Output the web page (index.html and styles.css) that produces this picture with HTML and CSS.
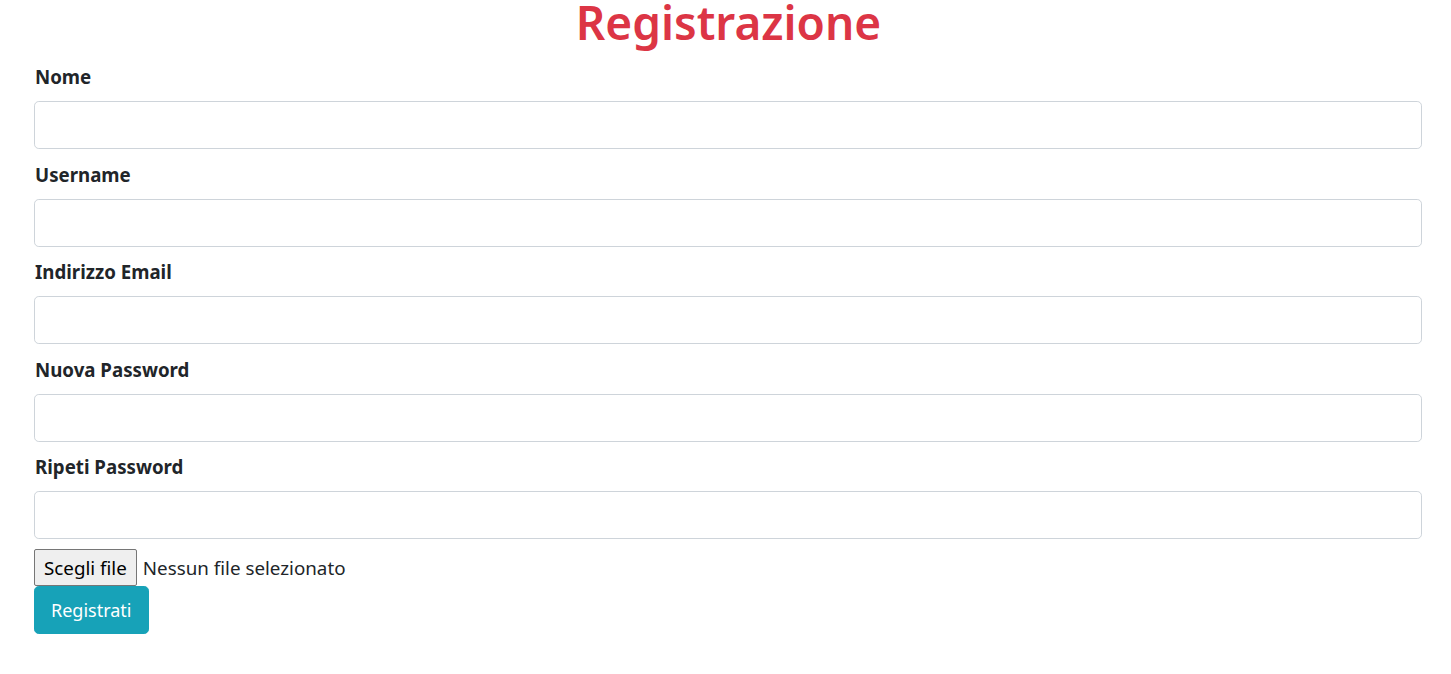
FILE: index.html
```html
<!DOCTYPE html>
<html lang="it">
<head>
<meta charset="utf-8">
<title>Registrazione</title>
<link rel="stylesheet" href="styles.css">
</head>
<body>
<div class="container">
  <h1 class="title">Registrazione</h1>
  <form class="form">
    <div class="group">
      <label class="label">Nome</label>
      <input class="control" type="text">
    </div>
    <div class="group">
      <label class="label">Username</label>
      <input class="control" type="text">
    </div>
    <div class="group">
      <label class="label">Indirizzo Email</label>
      <input class="control" type="email">
    </div>
    <div class="group">
      <label class="label">Nuova Password</label>
      <input class="control" type="password">
    </div>
    <div class="group last">
      <label class="label">Ripeti Password</label>
      <input class="control" type="password">
    </div>
    <div class="file-row">
      <span class="file-btn">Scegli file</span>
      <span class="file-name">Nessun file selezionato</span>
    </div>
    <button type="button" class="submit">Registrati</button>
  </form>
</div>
</body>
</html>
```
FILE: styles.css
```css
* { box-sizing: border-box; }
body {
  margin: 0;
  font-family: "Noto Sans", "Open Sans", sans-serif;
  font-size: 16px;
  color: #212529;
  background: #fff;
}
.container {
  padding: 0 29px 0 35px;
}
.title {
  margin: 0 0 21px;
  text-align: center;
  font-size: 46px;
  line-height: 45px;
  font-weight: 600;
  color: #dc3545;
}
.form {
  display: flex;
  flex-direction: column;
  align-items: flex-start;
}
.group {
  width: 100%;
  margin-bottom: 14.5px;
  display: flex;
  flex-direction: column;
  align-items: flex-start;
}
.group.last { margin-bottom: 10px; }
.label {
  font-weight: 700;
  font-size: 18.7px;
  line-height: 22px;
  margin-bottom: 13px;
}
.control {
  width: calc(100% + 1px);
  margin-left: -1px;
  height: 48px;
  border: 1px solid #ced4da;
  border-radius: 4.8px;
  background: #fff;
  font-size: 20px;
  padding: 8px 16px;
}
.file-row {
  display: flex;
  align-items: center;
  height: 37px;
  margin-left: -1px;
}
.file-btn {
  display: inline-flex;
  align-items: center;
  height: 37px;
  padding: 0 9px;
  border: 1px solid #767676;
  border-radius: 2px;
  background: #efefef;
  font-size: 18.8px;
  color: #000;
}
.file-name {
  margin-left: 6px;
  font-size: 18.8px;
  color: #212529;
}
.submit {
  margin-left: -1px;
  height: 48px;
  padding: 0 16px;
  border: 1px solid #17a2b8;
  border-radius: 4.8px;
  background: #17a2b8;
  color: #fff;
  font-family: inherit;
  font-size: 18px;
}
```
